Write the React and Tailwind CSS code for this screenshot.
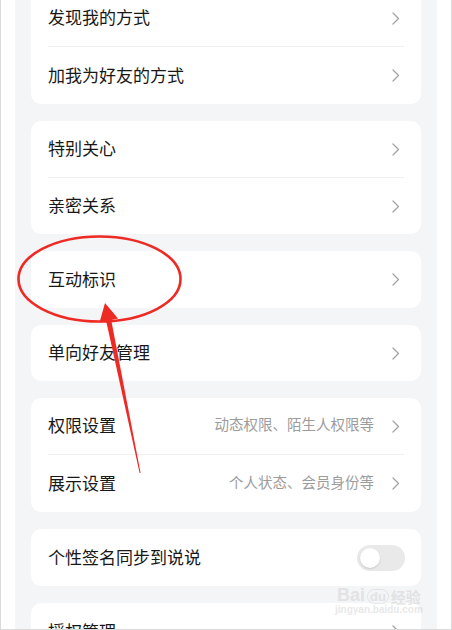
import React from 'react';

const Chevron = () => (
  <svg width="8" height="13" viewBox="0 0 8 13" fill="none" className="shrink-0">
    <path d="M1 1l5.5 5.5L1 12" stroke="#a3a3a3" strokeWidth="1.3" strokeLinecap="round" strokeLinejoin="round" />
  </svg>
);

const Row = ({ label, hint, toggle, h = 'h-[57px]' }) => (
  <div className={`${h} flex items-center pl-[17px] pr-[21px]`}>
    <span className="flex-1 pb-[3px] text-[17px] text-[#181818] leading-none">{label}</span>
    {hint && <span className="mr-[18px] pb-[3px] text-[14.5px] text-[#9c9c9c] leading-none">{hint}</span>}
    {toggle ? (
      <div className="-mr-[5px] w-[48px] h-[26px] rounded-full bg-[#e9e9e9] flex items-center px-[3px]">
        <div className="w-[20px] h-[20px] rounded-full bg-white shadow-[0_1px_2px_rgba(0,0,0,0.15)]" />
      </div>
    ) : (
      <Chevron />
    )}
  </div>
);

const Divider = () => <div className="mx-[17px] h-px bg-[#f0f0f0]" />;

const Card = ({ children, className = '' }) => (
  <div className={`bg-white rounded-[10px] shrink-0 ${className}`}>{children}</div>
);

export default function App() {
  return (
    <div className="relative w-[452px] h-[630px] overflow-hidden bg-white border-l border-r border-b border-[#dadada] px-[14px] font-['Noto_Sans_CJK_SC','Noto_Sans',sans-serif]">
      <div className="h-full bg-[#f4f5f7] px-4 flex flex-col gap-[17px]">
        <Card className="-mt-[10px]">
          <Row label="发现我的方式" h="h-[56px]" />
          <Divider />
          <Row label="加我为好友的方式" h="h-[57px]" />
        </Card>
        <Card>
          <Row label="特别关心" h="h-[56px]" />
          <Divider />
          <Row label="亲密关系" h="h-[56px]" />
        </Card>
        <Card>
          <Row label="互动标识" />
        </Card>
        <Card>
          <Row label="单向好友管理" h="h-[56px]" />
        </Card>
        <Card>
          <Row label="权限设置" hint="动态权限、陌生人权限等" h="h-[56px]" />
          <Divider />
          <Row label="展示设置" hint="个人状态、会员身份等" h="h-[57px]" />
        </Card>
        <Card>
          <Row label="个性签名同步到说说" toggle />
        </Card>
        <Card>
          <Row label="授权管理" />
        </Card>
      </div>

      {/* watermark */}
      <div className="absolute left-[334px] top-[586px] flex flex-col items-center opacity-40 pointer-events-none">
        <div className="flex items-end gap-[2px] text-[#c8c8c8] font-['Liberation_Sans',sans-serif] font-bold leading-none">
          <span className="text-[18px]">Bai</span>
          <span className="text-[13px] rounded-full border border-[#c8c8c8] px-[2px]">du</span>
          <span className="text-[15px] font-['Noto_Sans_CJK_SC',sans-serif]">经验</span>
        </div>
        <span className="text-[10px] text-[#c8c8c8] font-['Liberation_Sans',sans-serif] font-bold leading-tight">jingyan.baidu.com</span>
      </div>

      {/* red annotation */}
      <svg className="absolute left-0 top-0 pointer-events-none" width="452" height="630" viewBox="0 0 452 630">
        <ellipse cx="98.5" cy="279" rx="81" ry="42.5" fill="none" stroke="#ee2a24" strokeWidth="2.6" />
        <polygon
          points="104,303 117,318.5 110.2,320 139.6,473 138.6,473 105.2,321.2 98.5,322.5"
          fill="#ee2a24"
        />
      </svg>
    </div>
  );
}
